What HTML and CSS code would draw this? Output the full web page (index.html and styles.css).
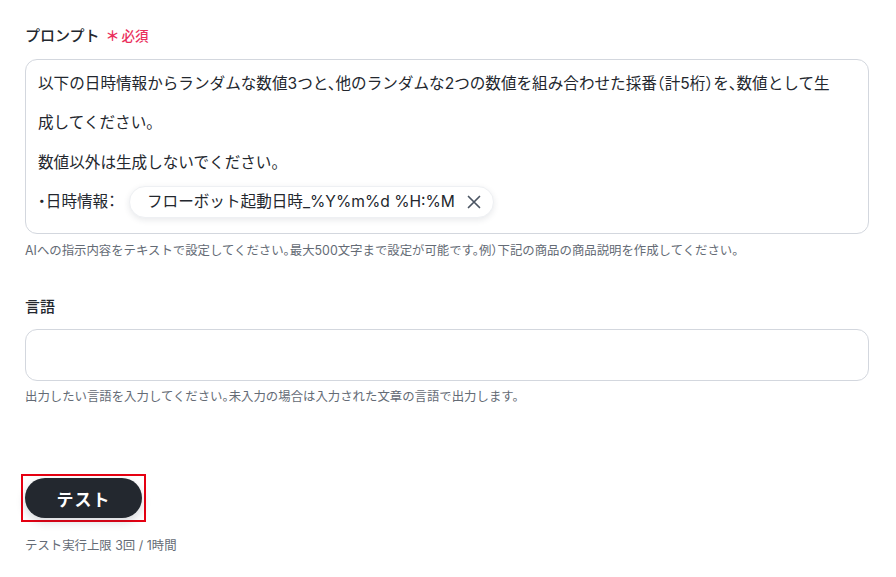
FILE: index.html
```html
<!DOCTYPE html>
<html lang="ja">
<head>
<meta charset="utf-8">
<link rel="stylesheet" href="styles.css">
</head>
<body>
<main class="form">
  <section class="field field-prompt">
    <div class="label">プロンプト <span class="required"><span class="star">＊</span>必須</span></div>
    <div class="textarea">
      <p class="line">以下の日時情報からランダムな数値3つと、他のランダムな2つの数値を組み合わせた採番（計5桁）を、数値として生成してください。</p>
      <p class="line">数値以外は生成しないでください。</p>
      <p class="line pill-line">・日時情報：<span class="pill">フローボット起動日時_%Y%m%d %H:%M<svg class="pill-x" width="14" height="14" viewBox="0 0 14 14"><path d="M1.5 1.5 L12.5 12.5 M12.5 1.5 L1.5 12.5" stroke="#4b5563" stroke-width="1.7" stroke-linecap="round"/></svg></span></p>
    </div>
    <p class="help">AIへの指示内容をテキストで設定してください。最大500文字まで設定が可能です。例）下記の商品の商品説明を作成してください。</p>
  </section>

  <section class="field field-lang">
    <div class="label">言語</div>
    <div class="input"></div>
    <p class="help">出力したい言語を入力してください。未入力の場合は入力された文章の言語で出力します。</p>
  </section>

  <section class="actions">
    <span class="highlight"><button class="test-btn">テスト</button></span>
    <p class="limit">テスト実行上限 3回 / 1時間</p>
  </section>
</main>
</body>
</html>
```

FILE: styles.css
```css
* { box-sizing: border-box; }
html, body { margin: 0; padding: 0; background: #fff; }
body {
  font-family: Inter, "Noto Sans CJK JP", "Noto Sans", sans-serif;
  font-feature-settings: "halt";
  color: #23272e;
  width: 896px;
  height: 577px;
  overflow: hidden;
}
.form {
  padding: 25px 27px 0 25px;
  display: flex;
  flex-direction: column;
}
.label {
  font-size: 15px;
  font-weight: 500;
  line-height: 22px;
  height: 22px;
  color: #23272e;
}
.required {
  color: #ea2f5c;
  font-size: 13.5px;
  margin-left: 2px;
}
.star { font-weight: 700; font-size: 14px; margin-right: 2px; }
.textarea {
  margin-top: 12px;
  border: 1px solid #d3d7de;
  border-radius: 12px;
  padding: 4px 26px 13px 12px;
  height: 175px;
}
.line {
  margin: 0;
  font-size: 15.6px;
  line-height: 39.3px;
  color: #23272e;
}
.pill-line { display: flex; align-items: center; }
.pill {
  display: inline-flex;
  align-items: center;
  height: 32px;
  padding: 0 12px 0 17px;
  margin-left: 13px;
  border-radius: 16px;
  background: #fff;
  border: 1px solid #eef0f3;
  box-shadow: 0 2px 6px rgba(30, 40, 60, 0.10);
  font-size: 15.6px;
  line-height: 32px;
}
.pill-x { margin-left: 12px; }
.help {
  margin: 8px 0 0;
  font-size: 12.4px;
  line-height: 18px;
  color: #646b75;
}
.field-lang { margin-top: 35px; }
.field-lang .label { line-height: 24px; height: 24px; }
.input {
  margin-top: 10px;
  height: 52px;
  border: 1px solid #d3d7de;
  border-radius: 12px;
}
.field-lang .help { margin-top: 7px; }
.actions { margin-top: 68px; display: flex; flex-direction: column; align-items: flex-start; }
.highlight {
  display: inline-block;
  margin-left: -4px;
  padding: 2px;
  border: 2px solid #e60012;
  line-height: 0;
}
.test-btn {
  display: block;
  width: 117px;
  height: 40px;
  border: none;
  border-radius: 20px;
  background: #23282f;
  color: #fff;
  font-family: inherit;
  font-size: 17px;
  font-weight: 700;
  letter-spacing: 1px;
  box-shadow: 0 4px 10px rgba(30, 40, 60, 0.18);
  cursor: pointer;
}
.limit {
  margin: 14px 0 0;
  font-size: 12.4px;
  line-height: 20px;
  color: #646b75;
}
```
